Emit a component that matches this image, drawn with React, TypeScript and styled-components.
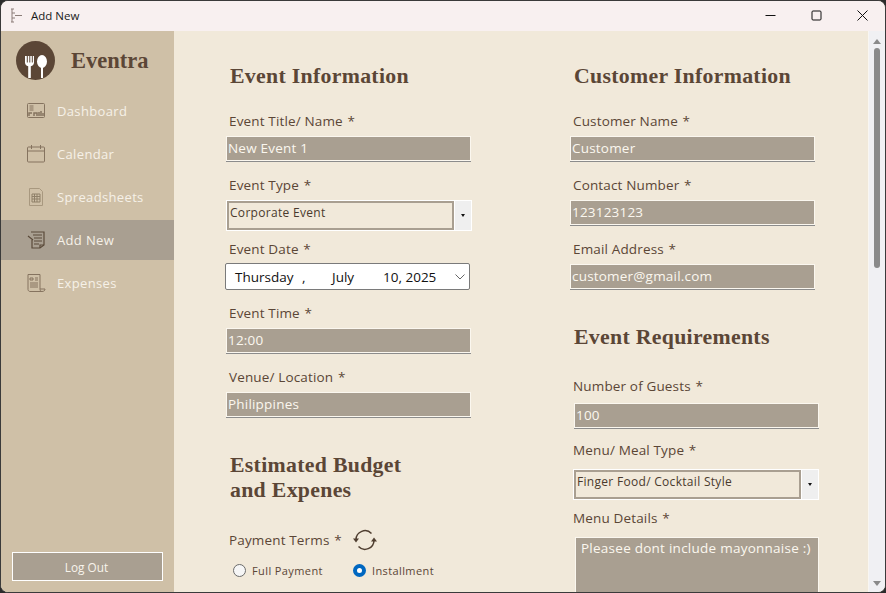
import React from 'react';
import styled, { createGlobalStyle } from 'styled-components';

const GlobalStyle = createGlobalStyle`
  html, body {
    margin: 0;
    width: 886px;
    height: 593px;
    overflow: hidden;
    background: #2b2b2b;
    font-family: "Open Sans", "Noto Sans", sans-serif;
  }
  * { box-sizing: border-box; }
`;

const Win = styled.div`
  width: 886px;
  height: 593px;
  display: flex;
  flex-direction: column;
  background: #f1e9da;
  border: 1px solid #3a3a3a;
  border-radius: 8px;
  overflow: hidden;
`;

const TitleBar = styled.div`
  height: 30px;
  flex: none;
  background: #f8f0f0;
  display: flex;
  align-items: center;
  padding: 0 0 2px 9px;
  color: #1a1a1a;
  font-size: 11.5px;
`;

const TitleText = styled.span`
  margin-left: 8px;
  flex: 1;
  font-family: "Open Sans", sans-serif;
`;

const WinButton = styled.button`
  width: 46px;
  height: 28px;
  border: 0;
  padding: 0;
  background: transparent;
  display: flex;
  align-items: center;
  justify-content: center;
`;

const Body = styled.div`
  flex: 1;
  min-height: 0;
  display: flex;
`;

const Sidebar = styled.aside`
  width: 173px;
  flex: none;
  background: #cfc0a7;
  display: flex;
  flex-direction: column;
  padding-top: 10px;
`;

const Brand = styled.div`
  display: flex;
  align-items: center;
  gap: 16px;
  padding-left: 15px;
  height: 39px;
  margin-bottom: 11px;
`;

const BrandName = styled.div`
  font-family: "Liberation Serif", serif;
  font-weight: 700;
  font-size: 22.5px;
  color: #5b4636;
`;

const NavItem = styled.div<{ $active?: boolean }>`
  height: 40px;
  margin-bottom: 3px;
  display: flex;
  align-items: center;
  gap: 11px;
  padding-left: 25px;
  color: #f6f1e8;
  font-size: 13px;
  letter-spacing: 0.35px;
  background: ${(p) => (p.$active ? '#a99f91' : 'transparent')};
`;

const LogoutWrap = styled.div`
  margin-top: auto;
  padding: 0 11px 11px;
`;

const Logout = styled.button`
  width: 151px;
  height: 29px;
  border: 1px solid #fff;
  background: #a99f91;
  color: #f8f4ec;
  font-family: "Open Sans", sans-serif;
  font-size: 11.8px;
  padding-right: 8px;
`;

const Main = styled.main`
  flex: 1;
  min-width: 0;
  overflow: hidden;
  display: flex;
  gap: 94px;
  padding: 33px 0 0 52px;
`;

const Column = styled.div`
  width: 250px;
  flex: none;
  display: flex;
  flex-direction: column;
`;

const Heading = styled.h2<{ $gap?: number }>`
  margin: ${(p) => p.$gap ?? 0}px 0 0 4px;
  font-family: "Liberation Serif", serif;
  font-weight: 700;
  font-size: 21.8px;
  line-height: 25px;
  letter-spacing: 0.3px;
  color: #5b4636;
`;

const Field = styled.div<{ $top?: number }>`
  margin-top: ${(p) => p.$top ?? 14}px;
  display: flex;
  flex-direction: column;
`;

const Label = styled.label<{ $h?: number }>`
  height: ${(p) => p.$h ?? 25}px;
  padding-left: 3px;
  font-size: 13.5px;
  line-height: 20px;
  letter-spacing: 0.15px;
  color: #5b4636;
`;

const Star = styled.span`
  color: #5b4636;
  margin-left: 1px;
`;

const TextBox = styled.div<{ $shift?: number }>`
  margin-left: ${(p) => p.$shift ?? 0}px;
  width: 245px;
  height: 25px;
  background: #a99f91;
  border: 1px solid #fbf7ef;
  box-shadow: 0 1px 0 #8c8c8c;
  padding-left: 1px;
  color: #fbf7ef;
  font-size: 13.5px;
  line-height: 22px;
  letter-spacing: 0.2px;
`;

const ComboRow = styled.div<{ $shift?: number }>`
  display: flex;
  height: 31px;
  margin-left: ${(p) => p.$shift ?? 0}px;
  width: 246px;
  border: 1px solid #fff;
`;

const ComboValue = styled.div`
  flex: 1;
  background: #f1e9da;
  border: 2px solid #a99f91;
  padding-left: 1px;
  color: #4a3a2d;
  font-size: 12px;
  line-height: 20px;
  letter-spacing: 0.3px;
`;

const ComboArrow = styled.div`
  width: 17px;
  background: #efefef;
  border-left: 1px solid #fff;
  display: flex;
  align-items: center;
  justify-content: center;
  &::after {
    content: "";
    border-left: 2.5px solid transparent;
    border-right: 2.5px solid transparent;
    border-top: 3px solid #111;
  }
`;

const DateBox = styled.div`
  height: 27px;
  width: 245px;
  margin-left: -1px;
  background: #fff;
  border: 1px solid #7a7a7a;
  border-radius: 2px;
  display: flex;
  align-items: center;
  padding-left: 9px;
  color: #111;
  font-size: 13.5px;
`;

const DatePart = styled.span<{ $w: number }>`
  width: ${(p) => p.$w}px;
  flex: none;
`;

const DateChevron = styled.svg`
  margin-left: 10px;
`;

const TermsRow = styled.div`
  margin-top: 25px;
  padding-left: 3px;
  display: flex;
  align-items: center;
  gap: 11px;
  height: 24px;
  font-size: 13.5px;
  letter-spacing: 0.15px;
  color: #5b4636;
`;

const RadioRow = styled.div`
  margin-top: 10px;
  padding-left: 7px;
  display: flex;
  gap: 30px;
`;

const RadioItem = styled.div`
  display: flex;
  align-items: center;
  gap: 6px;
  font-size: 11px;
  letter-spacing: 0.4px;
  color: #5b4636;
  height: 16px;
`;

const RadioDot = styled.span<{ $on?: boolean }>`
  width: 13px;
  height: 13px;
  border-radius: 50%;
  background: ${(p) => (p.$on ? '#fff' : '#f6f6f6')};
  border: ${(p) => (p.$on ? '4px solid #0067c0' : '1px solid #6b6b6b')};
`;

const MenuBox = styled.div`
  margin: 4px 0 0 5px;
  width: 244px;
  height: 90px;
  background: #a99f91;
  border: 1px solid #fbf7ef;
  padding: 1px 5px;
  color: #fbf7ef;
  font-size: 13.5px;
  letter-spacing: 0.25px;
`;

const Scrollbar = styled.div`
  width: 17px;
  flex: none;
  background: #f0f0f3;
  border-left: 1px solid #f8f6f2;
  display: flex;
  flex-direction: column;
  align-items: center;
`;

const ScrollUp = styled.div`
  margin-top: 8px;
  width: 0;
  height: 0;
  border-left: 4px solid transparent;
  border-right: 4px solid transparent;
  border-bottom: 5px solid #8a8a8a;
`;

const Thumb = styled.div`
  margin-top: 4px;
  width: 6px;
  height: 220px;
  border-radius: 3px;
  background: #8a8a8a;
`;

const ScrollDown = styled.div`
  margin-top: auto;
  margin-bottom: 6px;
  width: 0;
  height: 0;
  border-left: 4px solid transparent;
  border-right: 4px solid transparent;
  border-top: 5px solid #8a8a8a;
`;

const navStroke = { fill: 'none', stroke: '#85735f', strokeWidth: 1 };

const DashboardIcon = () => (
  <svg width="20" height="20" viewBox="0 0 20 20" {...navStroke}>
    <rect x="1.500" y="2.500" width="17" height="14" rx="1" />
    <path d="M3.500 5h4M3.500 7h4M3.500 9h4" />
    <path d="M3 15v-3h3M8 15v-3h3v3M13 15v-4M15 15v-5M17 15v-3" strokeWidth="1.5" />
  </svg>
);

const CalendarIcon = () => (
  <svg width="20" height="20" viewBox="0 0 20 20" {...navStroke}>
    <rect x="1.500" y="3" width="17" height="15" rx="1" />
    <path d="M1.500 7h17M5.500 1v4M14.500 1v4" />
  </svg>
);

const SheetIcon = () => (
  <svg width="20" height="20" viewBox="0 0 20 20" {...navStroke}>
    <path d="M3.500 1.500h10l3 3v14h-13z" stroke="#a8987f" />
    <path d="M6 7h8v8H6zM6 9.500h8M6 12h8M8.500 7v8M11 7v8" stroke="#8f8069" />
  </svg>
);

const AddIcon = () => (
  <svg width="20" height="20" viewBox="0 0 20 20" fill="none" stroke="#5b4a3a" strokeWidth="1.2">
    <path d="M5 2h13v13l-4 3H6V10" />
    <path d="M7 5h9M8 8h8M8 11h8M8 14h5M2 6l5 4" />
    <path d="M14 18v-3h4" />
  </svg>
);

const ExpenseIcon = () => (
  <svg width="20" height="20" viewBox="0 0 20 20" {...navStroke}>
    <path d="M2 1.500h12v15c0 1 1 2 2 2H4c-1 0-2-1-2-2zM14 16h5c0 1.500-1 2.500-3 2.500" />
    <path d="M4 5h3v2H4zM9 5h3M9 7h3M4 10h8M4 12h8M4 14h8" />
  </svg>
);

const BrandLogo = () => (
  <svg width="39" height="39" viewBox="0 0 39 39">
    <circle cx="19.500" cy="19.500" r="19.500" fill="#5b4636" />
    <path d="M9 15v6.500c0 2 1.300 3.300 3.200 3.800V37h2.600V25.300c1.900-.5 3.200-1.800 3.200-3.800V15h-1.200v6.500h-1V15h-1.500v6.500h-1V15h-1.500v6.500h-1V15z" fill="#fff" />
    <ellipse cx="26" cy="20.500" rx="5" ry="6.500" fill="#fff" />
    <rect x="25" y="26" width="2" height="11" fill="#fff" />
  </svg>
);

const SyncIcon = () => (
  <svg width="24" height="24" viewBox="0 0 24 24" fill="none" stroke="#4f3e30" strokeWidth="1.5">
    <path d="M3 11.500A9 9 0 0 1 18.500 5.500" />
    <path d="M21 12.500A9 9 0 0 1 5.500 18.500" />
    <path d="M0 10.500h6l-3 4z" fill="#4f3e30" stroke="none" />
    <path d="M18 13.500h6l-3-4z" fill="#4f3e30" stroke="none" />
  </svg>
);

const AppLogo = () => (
  <svg width="13" height="15" viewBox="0 0 13 15" fill="none" stroke="#8b7d78" strokeWidth="1">
    <path d="M1 1h3M2 1v13M1 14h3M2 5h3M2 10h3M5 7.500h7" />
  </svg>
);

const App = () => {
  return (
    <>
      <GlobalStyle />
      <Win>
        <TitleBar>
          <AppLogo />
          <TitleText>Add New</TitleText>
          <WinButton>
            <svg width="11" height="11" viewBox="0 0 11 11" stroke="#111" strokeWidth="1"><path d="M0.500 5.500h10" /></svg>
          </WinButton>
          <WinButton>
            <svg width="11" height="11" viewBox="0 0 11 11" fill="none" stroke="#111" strokeWidth="1"><rect x="1" y="1" width="9" height="9" rx="1" /></svg>
          </WinButton>
          <WinButton>
            <svg width="11" height="11" viewBox="0 0 11 11" stroke="#111" strokeWidth="1"><path d="M0.500 0.500l10 10M10.500 0.500l-10 10" /></svg>
          </WinButton>
        </TitleBar>
        <Body>
          <Sidebar>
            <Brand>
              <BrandLogo />
              <BrandName>Eventra</BrandName>
            </Brand>
            <NavItem><DashboardIcon />Dashboard</NavItem>
            <NavItem><CalendarIcon />Calendar</NavItem>
            <NavItem><SheetIcon />Spreadsheets</NavItem>
            <NavItem $active><AddIcon />Add New</NavItem>
            <NavItem><ExpenseIcon />Expenses</NavItem>
            <LogoutWrap>
              <Logout>Log Out</Logout>
            </LogoutWrap>
          </Sidebar>
          <Main>
            <Column>
              <Heading>Event Information</Heading>
              <Field $top={22}>
                <Label>Event Title/ Name <Star>*</Star></Label>
                <TextBox>New Event 1</TextBox>
              </Field>
              <Field>
                <Label>Event Type <Star>*</Star></Label>
                <ComboRow>
                  <ComboValue>Corporate Event</ComboValue>
                  <ComboArrow />
                </ComboRow>
              </Field>
              <Field $top={8}>
                <Label $h={24}>Event Date <Star>*</Star></Label>
                <DateBox>
                  <DatePart $w={67}>Thursday</DatePart>
                  <DatePart $w={30}>,</DatePart>
                  <DatePart $w={51}>July</DatePart>
                  <DatePart $w={62}>10, 2025</DatePart>
                  <DateChevron width="10" height="6" viewBox="0 0 10 6" fill="none" stroke="#666"><path d="M0.500 0.500L5 5l4.500-4.500" /></DateChevron>
                </DateBox>
              </Field>
              <Field $top={13}>
                <Label>Event Time <Star>*</Star></Label>
                <TextBox>12:00</TextBox>
              </Field>
              <Field>
                <Label>Venue/ Location <Star>*</Star></Label>
                <TextBox>Philippines</TextBox>
              </Field>
              <Heading $gap={36}>Estimated Budget<br />and Expenes</Heading>
              <TermsRow>
                <span>Payment Terms <Star>*</Star></span>
                <SyncIcon />
              </TermsRow>
              <RadioRow>
                <RadioItem><RadioDot />Full Payment</RadioItem>
                <RadioItem><RadioDot $on />Installment</RadioItem>
              </RadioRow>
            </Column>
            <Column>
              <Heading>Customer Information</Heading>
              <Field $top={22}>
                <Label>Customer Name <Star>*</Star></Label>
                <TextBox>Customer</TextBox>
              </Field>
              <Field>
                <Label>Contact Number <Star>*</Star></Label>
                <TextBox>123123123</TextBox>
              </Field>
              <Field>
                <Label>Email Address <Star>*</Star></Label>
                <TextBox>customer@gmail.com</TextBox>
              </Field>
              <Heading $gap={36}>Event Requirements</Heading>
              <Field $top={26}>
                <Label $h={27}>Number of Guests <Star>*</Star></Label>
                <TextBox $shift={4}>100</TextBox>
              </Field>
              <Field $top={12}>
                <Label $h={29}>Menu/ Meal Type <Star>*</Star></Label>
                <ComboRow $shift={3}>
                  <ComboValue>Finger Food/ Cocktail Style</ComboValue>
                  <ComboArrow />
                </ComboRow>
              </Field>
              <Field $top={8}>
                <Label>Menu Details <Star>*</Star></Label>
                <MenuBox>Pleasee dont include mayonnaise :)</MenuBox>
              </Field>
            </Column>
          </Main>
          <Scrollbar>
            <ScrollUp />
            <Thumb />
            <ScrollDown />
          </Scrollbar>
        </Body>
      </Win>
    </>
  );
};

export default App;
